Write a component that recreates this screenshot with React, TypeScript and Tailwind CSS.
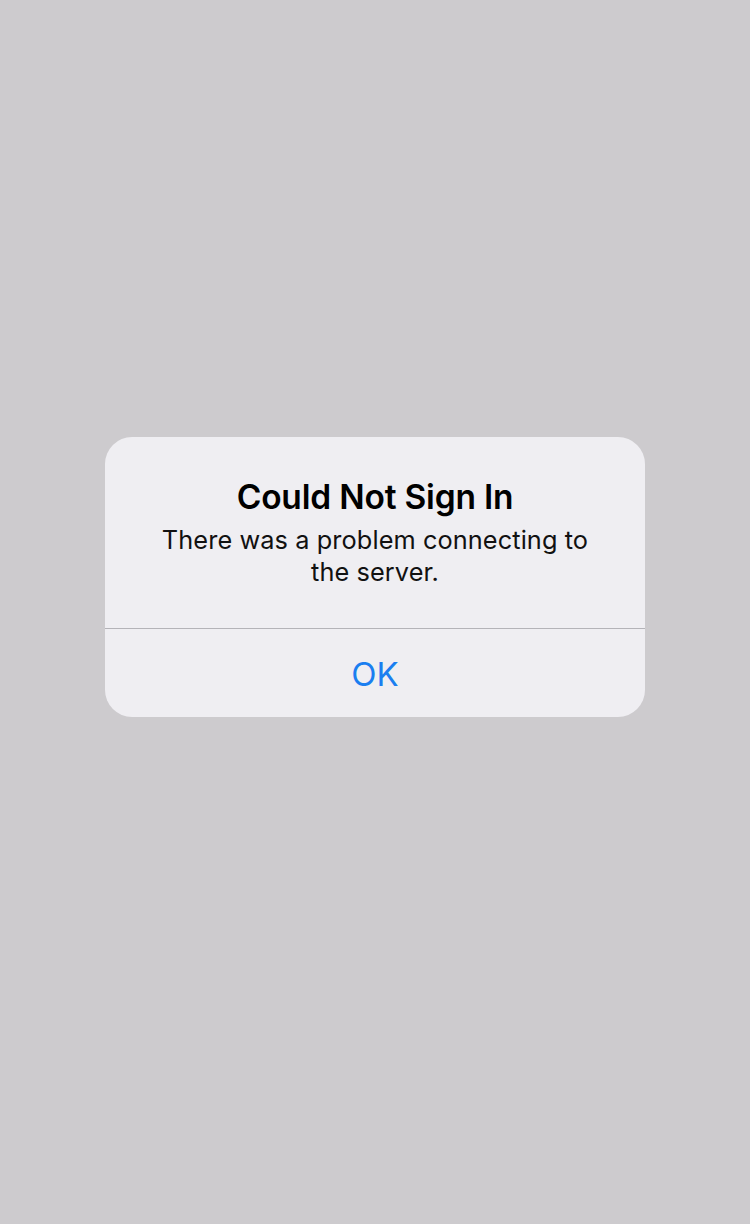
export default function App() {
  return (
    <div
      className="w-[750px] h-[1224px] bg-[#cdcbce] flex flex-col items-center pt-[437px]"
      style={{ fontFamily: "Inter, 'Noto Sans', sans-serif" }}
    >
      <div className="w-[540px] h-[280px] rounded-[27px] bg-[#efeef2] flex flex-col overflow-hidden">
        <div className="h-[192px] flex flex-col items-center pt-[40px] border-b border-[#b4b3b8]">
          <h1 className="text-[33.5px] leading-[40px] font-semibold text-black tracking-[-0.2px]">
            Could Not Sign In
          </h1>
          <p className="mt-[7px] text-[25.3px] leading-[32px] text-[#111] text-center px-[45px] tracking-[0.1px]">
            There was a problem connecting to the server.
          </p>
        </div>
        <div className="flex-1 flex items-center justify-center pt-[2px]">
          <span className="text-[33px] leading-[40px] text-[#1a7ef0]">OK</span>
        </div>
      </div>
    </div>
  );
}
